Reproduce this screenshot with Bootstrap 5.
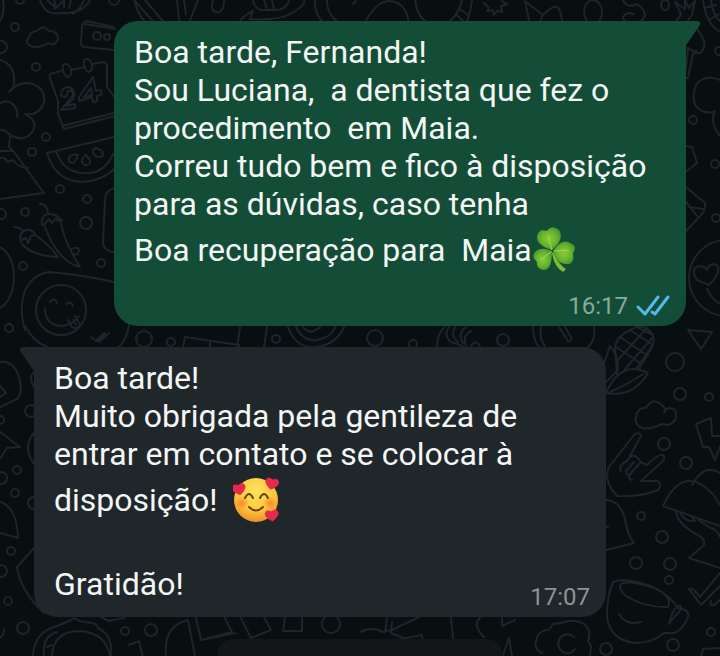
<!DOCTYPE html>
<html lang="pt-BR" data-bs-theme="dark">
<head>
<meta charset="utf-8">
<meta name="viewport" content="width=device-width, initial-scale=1">
<title>Conversa</title>
<link href="https://cdn.jsdelivr.net/npm/bootstrap@5.3.0/dist/css/bootstrap.min.css" rel="stylesheet">
<style>
  body { background: #070f11; font-family: Roboto, "Noto Sans", sans-serif; }
  .chat { padding: 21px 34px 0; gap: 21px; }
  .wallpaper { z-index: 0; fill: none; stroke: #1d252a; stroke-width: 2; stroke-linecap: round; stroke-linejoin: round; }
  .bubble { width: calc(100% - 80px); padding: 12px 20px 0; border-radius: 24px; font-size: 32px; line-height: 38px; color: #f3f6f5; z-index: 1; }
  .bubble p { white-space: pre-wrap; }
  .bubble-out { background: #144d37; border-top-right-radius: 0; padding-bottom: 6px; }
  .bubble-in { background: #20272b; border-top-left-radius: 0; padding-bottom: 14px; }
  .tail { top: 0; width: 15px; height: 24px; }
  .tail-out { left: 100%; fill: #144d37; }
  .tail-in { right: 100%; fill: #20272b; }
  .tall-line { line-height: 54px; }
  .emoji { width: 46px; height: 46px; }
  .stamp { font-size: 24px; line-height: 28px; }
  .stamp-out { color: #88a99b; padding: 15px 0 0; gap: 8px; margin-right: -4px; }
  .stamp-in { color: #8d9296; margin: 0 -4px -8px 0; }
  .next-bubble { width: 44%; height: 17px; background: #121618; border-radius: 16px 16px 0 0; z-index: 1; }
</style>
<script src="https://cdn.jsdelivr.net/npm/bootstrap@5.3.0/dist/js/bootstrap.bundle.min.js"></script>
</head>
<body>
<main class="chat position-relative d-flex flex-column min-vh-100 overflow-hidden">
  <svg class="wallpaper position-absolute top-0 start-0 w-100 h-100" viewBox="0 0 720 656" preserveAspectRatio="xMidYMid slice" aria-hidden="true">
    <!-- small dots -->
    <g>
      <circle cx="15" cy="27" r="4"/><circle cx="20" cy="0" r="4"/><circle cx="114" cy="0" r="5"/><circle cx="36" cy="67" r="4"/><circle cx="1" cy="47" r="6"/>
      <circle cx="46" cy="137" r="4"/><circle cx="32" cy="152" r="4"/><circle cx="60" cy="189" r="4"/><circle cx="87" cy="199" r="4"/><circle cx="86" cy="223" r="6"/>
      <circle cx="25" cy="212" r="4"/><circle cx="1" cy="214" r="5"/><circle cx="101" cy="263" r="4"/><circle cx="23" cy="266" r="4"/><circle cx="9" cy="328" r="4"/>
      <circle cx="31" cy="411" r="6"/><circle cx="0" cy="420" r="4"/><circle cx="1" cy="478" r="6"/><circle cx="17" cy="470" r="4"/><circle cx="15" cy="493" r="4"/><circle cx="34" cy="503" r="6"/><circle cx="11" cy="551" r="4"/><circle cx="1" cy="571" r="6"/>
      <circle cx="144" cy="339" r="8"/><circle cx="171" cy="342" r="4"/><circle cx="276" cy="339" r="4"/><circle cx="375" cy="338" r="8"/><circle cx="413" cy="344" r="4"/><circle cx="503" cy="340" r="6"/>
      <circle cx="675" cy="362" r="9"/><circle cx="680" cy="394" r="6"/><circle cx="709" cy="397" r="4"/><circle cx="664" cy="444" r="6"/><circle cx="686" cy="463" r="6"/>
      <circle cx="641" cy="516" r="4"/><circle cx="662" cy="537" r="6"/><circle cx="636" cy="563" r="6"/><circle cx="670" cy="564" r="6"/><circle cx="669" cy="580" r="4"/>
      <circle cx="711" cy="632" r="4"/><circle cx="673" cy="645" r="6"/><circle cx="606" cy="649" r="6"/><circle cx="693" cy="120" r="4"/><circle cx="715" cy="164" r="4"/><circle cx="716" cy="218" r="4"/><circle cx="719" cy="51" r="4"/>
      <circle cx="8" cy="601" r="4"/><circle cx="23" cy="628" r="6"/><circle cx="125" cy="631" r="4"/><circle cx="151" cy="630" r="6"/>
      <ellipse cx="593" cy="12" rx="9" ry="12"/><ellipse cx="665" cy="5" rx="4" ry="5"/><path d="M213 0q-3 11 3 12q8 2 8-12"/><circle cx="331" cy="624" r="9"/>
    </g>
    <!-- top edge: ball, chillies, shoe, plates, leaves -->
    <path d="M3 0q2 13-3 21M40 0q5 16 21 13Q83 14 90 0M47 0l9 8 8-8M54 0q2 7 0 9M64 0v7M71 0q-1 5-2 8M84 0q-3 9-11 14"/>
    <path d="M134 0l26 29M145 0l23 27M135 3q4 15 17 26M177 0l3 29M198 0l-11 28M184 0l2 14"/>
    <path d="M236 28q5-12 17-17l-3 8q29 2 42-6q14-8 12-13M253 0q1 8 8 10h18q9-3 10-10M264 0l3 9M272 0l2 9M315 0q-1 20 18 29M327 0q-1 14 13 24M362 29q13-29 28-28q19 2 19 28M356 1l-3 3"/>
    <path d="M415 0q3 23 22 26q19-2 25-26M472 0q-2 17-8 28M456 14l8 8M460 9l8 6M484 3l5 5-2 3 6-1 1 5 3-4 5 1-1-6 6-2-5-3"/>
    <path d="M525 1q3 15 6 27M526 2l17 13q-5 8-1 14M543 15q14-14 17-4q2 7 3 17M563 22q8 1 6 7M623 0q4 9 14 4q8 5 8 12q-5 9-12 6q-8 2-10-4q2-7 11-4M668 28q10-7 13-14l-6-12 10 7 0-9 4 8 6-7-3 14-6 8M703 0q3 24 17 32M711 0q2 16 9 21M704 8l12-3M709 20l10-6"/>
    <!-- left side: cloud, box, calendar, tree, watermelon -->
    <path d="M29 37q2-6 8-6q6-7 12 0q9 0 9 8q-3 8-10 4q-9 6-17 3q-7-3-2-9"/>
    <path d="M114 27l-27-6q-5 2-5 6l-1 16q0 3 3 4l30 3M85 24l30 5"/><circle cx="97" cy="36" r="4"/><circle cx="107" cy="37" r="3"/>
    <path d="M61 71l-11 3q-1 2 0 4l8 23v13l6 15 51-13M62 126l52-13M71 70l14-3M93 64l11-2q3 1 3 5v20l8 11M63 71q-2-8 4-7q5 3 4 10q-4 7-8-3M84 66q-2-8 4-7q5 3 4 10q-4 7-8-3"/>
    <path d="M61 96q0-9 8-9q8 4 4 12l-7 7 9-2v4l-14 2 12-15q0-5-5-4l-2 6zM91 80l-12 17v4l13-4 1 5 4-1v-5l5-2-1-4-5 1-3-14zm0 8l-7 9 8-2z"/>
    <path d="M0 60q16 5 14 24q0 4-5 8q10-12 24-8q13 5 11 18q-4 14-19 12q13 6 8 17q-8 12-23 4q-6-6-10-5M0 103q12-5 17 8q1 4 0 6M10 137l-1 10 5 5 30 41-44 6M0 151l12 0M0 158q6-1 7 4l6-2q6 8 15 8"/>
    <path d="M47 153q10 33 43 28q16-3 25-13M47 153l67-16M56 151q8 24 33 22q16-1 24-19M78 155q-10-2-9 6q5 6 9-6M86 155q-8 6-1 10q10 0 1-10M95 148q-5 4 2 9q8 1 5-6q-3-2-7-3M114 188q-9 3-9 12l-2 43q1 8 11 9"/>
    <!-- peppers and face -->
    <path d="M40 204q7 0 8 9M42 225q-1-11 7-11q9 0 12 7q1 17 19 46q-22-5-36-42M44 225l5-6 3 4 4-5 2 3 4-1M14 227q8 0 9 5M21 242q-3-9 5-12q7-1 9 5q12 7 23 22q-26-1-36-13M21 240l5-2 2 5 3-7 4-1M71 249q8-3 8 2q-1 5-6 3"/>
    <path d="M0 247q14 8 14 31q-1 22-14 30M25 330q-6-19-1-37q7-18 25-21q34 3 65 10"/><circle cx="61" cy="310" r="25"/><path d="M45 308q0 17 16 18q10 0 18-10M50 302q4-6 7 1M66 304q5-4 7 2M68 320l4 7q5 3 8-2l-5-9M73 320l3 5M25 326q8 15 22 21M129 325q-2 14-10 22M91 337l5 4 8-8M97 341l8-7M99 342l10-9"/>
    <!-- right side -->
    <path d="M696 27l8 13q2 8-4 13h-7l-5 25h-10M688 50l-3 27M680 49l8-1q5 4 9 3M720 80q-15-7-24 5q-7 20 6 26q8 3 13 0q-6 11 5 25M686 146l6 1 5 16-10 8M686 187l19 16q1 7-4 12l-15 16M686 202l12 15M689 207l14 2"/>
    <circle cx="727" cy="278" r="38"/><path d="M709 285l-12-5q-8-13 4-14q5 1 6 4q2-8 10-5q5 7-8 20M707 289q4 10 13 15M688 330l24 2-11 17z"/>
    <!-- strip between the bubbles -->
    <path d="M183 347l2-10 54 8-1 4M210 342v6M240 327l-3 21M267 327l-3 20M288 327q8 22 28 20q20-2 28-20M296 327q7 15 21 13q15-3 18-13M303 327q7 9 17 0M437 347q0-14 8-20M449 327q-6 8 2 15l12 4M455 327q-5 9 3 15M466 327q-9 7-3 16M471 331q-9 4-5 15M471 346q5-8 9 1M533 327q0 13 6 20M541 327q-2 12 4 19M559 327l9 14q4 0 3-4l-6-10M594 327q2 13-6 20"/>
    <!-- corn, cloud, hand, bell, mushroom, cup -->
    <path d="M632 329q10-6 18 2q8 9-2 23l-9 15M632 329q-16 7-17 19l2 26M620 337l28 19M616 347l24 16M630 330l23 15M637 327l16 8M617 361l30-33M625 369l28-32M636 369l16-23M606 393q15-34 42-20q-15 25-42 20M610 392q16-7 33-18M606 382l12-12q0-16-8-24l-7 20"/>
    <path d="M636 417q2-10 10-9q7-12 17-2q4 4 1 7q3-8 11-3q4 11-7 15q-5-1-6-1q-12 6-20 4q-8-4-6-11"/>
    <path d="M609 467l25-32q5-4 7 1l-11 20M609 467q-6 14 8 29q25 1 41-6q5-6-1-9h-16l22-20q3-6-1-6q-5 0-15 10M621 471q-3-6 6-10q4-8 10-4l4 5-12 13q-3 0-3-4l8-9M632 480q-6-2 1-9l8-9 6 3M696 424l15-6 1 18h10M696 424l7 23h6l6 13 5-14"/>
    <path d="M606 500q15 1 19 19q2 15 9 24l-28 7M606 527h2M663 506q20-43 50-12l9 14M663 506l57 20M692 485q12-22 28-12M676 512q2 12 20 22q10 5 8 11l-15 13 31 10M681 514q4 8 14 7l-4-5M698 520l11 7q9 3 11 10"/>
    <path d="M613 582q6-3 19-1q31 5 46 27q12 2 10 9q-5 13-14 16h-10q-11 10-29 10q-25-3-28-26q0-22 6-35M620 586q2-8 35 2q18 9 13 19q-22 1-42-11q-6-5-6-10M619 614q7 12 22 8M669 624l3-10q5-10 9-8q1 4-6 10zM689 589q4-1 6 2l5 6 20-24M689 589l12 16 20-20M711 601q-2 6 3 4l7-6"/>
    <!-- left edge -->
    <path d="M0 362q15-2 20 19q3 15-5 19l-15 7M0 386l6 7-6 4M34 372q-6 6 0 15M0 432l20 15-13 1-7 11M34 433q-12 14 0 31M0 502q17 5 18 36l-18-5M34 548l-17 19q4 25 27 46"/>
    <!-- lower edge -->
    <path d="M0 638q4-3 4-9M33 656q1-24 24-30l12-5q6-5 10 0l13 2q4 0 6 5q15 7 13 28M44 656q-2-20 13-24M52 656q1-25 28-25q26 2 30 25M47 647l5-2M101 617l8 4 15-3M129 645l10-4 4 17M166 656q-3-30 22-36l7 36M196 618l5 22 31-8-8-16M241 618l10 20 20-8-7-13M201 640l35-7M285 617l-2 14h19v-13M360 632q14-6 22 0l12-3M387 618l-2 14M392 622l-1 11 13 5M392 630l27-13M397 640l25-5 2 21M451 618l2 20M480 618q-8 7 4 19M502 618v8l13-6M503 655l6-17 3 18M590 656l1-10-3-5q4-11-4-17q-10-6-23-1l-8 1-4 6q-10 0-12 8q-5 10 5 15M574 637q-8-6-14 1q-5 10 5 15q7 1 10-4M701 656l2-7 17-1"/>
  </svg>

  <article class="bubble bubble-out position-relative align-self-end">
    <svg class="tail tail-out position-absolute" viewBox="0 0 15 24" aria-hidden="true"><path d="M-1 0H11q4 0 3 4L0 24h-1z"/></svg>
    <p class="mb-0">Boa tarde, Fernanda!</p>
    <p class="mb-0">Sou Luciana,  a dentista que fez o procedimento  em Maia.</p>
    <p class="mb-0">Correu tudo bem e fico à disposição para as dúvidas, caso tenha</p>
    <p class="mb-0 tall-line d-flex align-items-center">Boa recuperação para  Maia<svg class="emoji" viewBox="0 0 46 46" role="img" aria-label="Trevo">
      <defs><radialGradient id="leaf"><stop offset="0" stop-color="#8ccc38"/><stop offset=".65" stop-color="#67b52d"/><stop offset="1" stop-color="#4b9c2c"/></radialGradient></defs>
      <path d="M21 25q6 13 13 17l-3 3q-9-5-11-19z" fill="#7dbb37"/>
      <g fill="url(#leaf)"><path d="M20 23Q4 18 5 9Q7 1 15 4Q20-3 27 3Q33 12 20 23z"/><path d="M21 24Q30 11 38 16Q46 19 41 26Q43 38 34 37Q25 37 21 24z"/><path d="M20 24Q20 43 12 43Q4 42 5 35Q-1 30 3 25Q9 19 20 24z"/></g>
      <path d="M20 23L16 9M22 24l15-1M19 25L8 33" stroke="#a3d84c" stroke-width="1" fill="none"/>
    </svg></p>
    <div class="stamp stamp-out d-flex justify-content-end align-items-center">
      <time datetime="16:17">16:17</time>
      <svg width="34" height="22" viewBox="0 0 34 22" fill="none" stroke="#53b9e8" stroke-width="3" stroke-linecap="round" stroke-linejoin="round" role="img" aria-label="Lida"><path d="M2 12l7 7L22 2M16 17l3 2L32 2"/></svg>
    </div>
  </article>

  <article class="bubble bubble-in position-relative align-self-start">
    <svg class="tail tail-in position-absolute" viewBox="0 0 15 24" aria-hidden="true"><path d="M16 0H4Q0 0 1 4L15 24h1z"/></svg>
    <p class="mb-0">Boa tarde!</p>
    <p class="mb-0">Muito obrigada pela gentileza de entrar em contato e se colocar à</p>
    <p class="mb-0 tall-line d-flex align-items-center">disposição!  <svg class="emoji" viewBox="0 0 46 46" role="img" aria-label="Rosto sorridente com corações">
      <defs><radialGradient id="skin" cx=".5" cy=".3" r=".72"><stop offset="0" stop-color="#ffe45c"/><stop offset=".6" stop-color="#fdc83b"/><stop offset="1" stop-color="#ee8c25"/></radialGradient>
      <radialGradient id="blush"><stop offset="0" stop-color="#f7702c" stop-opacity=".75"/><stop offset="1" stop-color="#f7702c" stop-opacity="0"/></radialGradient>
      <path id="love" d="M6 11Q0 7 0 4Q1-1 6 2Q11-1 12 4Q12 7 6 11z"/></defs>
      <circle cx="23" cy="23" r="22" fill="url(#skin)"/>
      <circle cx="9" cy="26" r="7" fill="url(#blush)"/><circle cx="37" cy="26" r="7" fill="url(#blush)"/>
      <g fill="none" stroke="#6d4218" stroke-width="2" stroke-linecap="round"><path d="M12 21q4-8 8 0M27 21q4-8 8 0M16 30q7 7 14 0"/></g>
      <g fill="#e52a4c"><use href="#love" transform="translate(-1 6) rotate(-12 6 6) scale(1.15)"/><use href="#love" transform="translate(32 0) rotate(12 6 6) scale(1.15)"/><use href="#love" transform="translate(32 32) rotate(-8 6 6) scale(1.15)"/></g>
    </svg></p>
    <p class="mb-0">&nbsp;</p>
    <div class="d-flex justify-content-between align-items-end">
      <p class="mb-0">Gratidão!</p>
      <time class="stamp stamp-in" datetime="17:07">17:07</time>
    </div>
  </article>

  <div class="next-bubble align-self-center mt-auto"></div>
</main>
</body>
</html>
